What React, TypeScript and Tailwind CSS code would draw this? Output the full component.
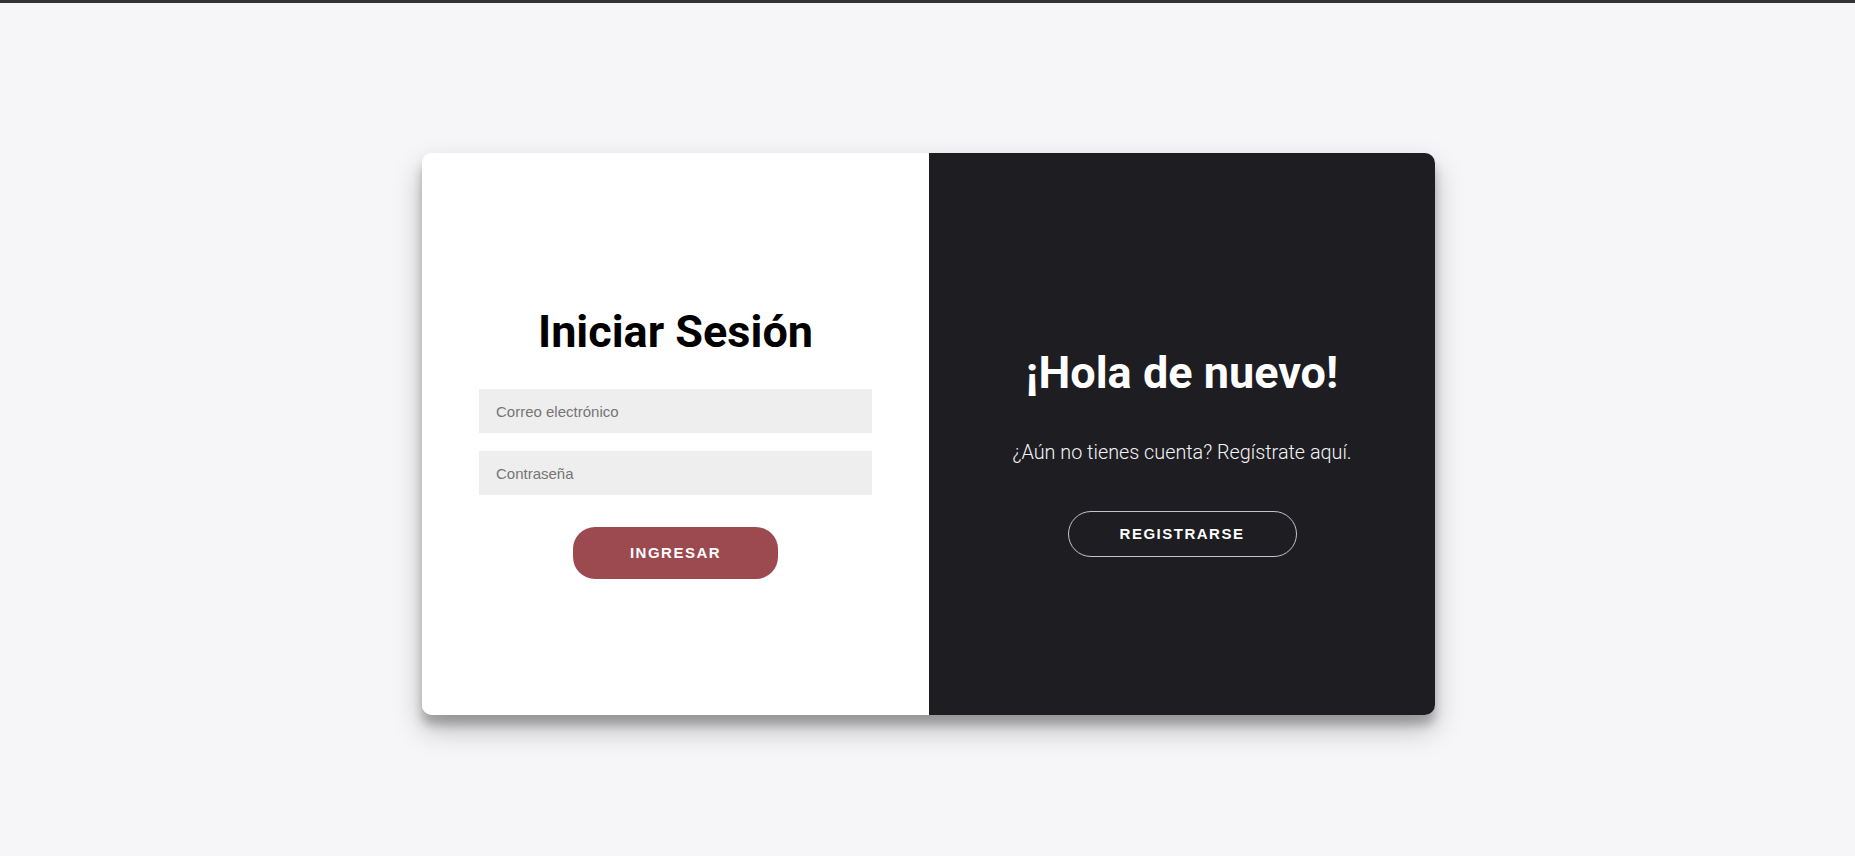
import { useState } from "react";

const App: React.FC = () => {
    const [email, setEmail] = useState("");
    const [password, setPassword] = useState("");

    return (
        <div className="min-h-screen bg-[#f6f6f8] font-['Roboto',sans-serif]">
            <div className="h-[3px] bg-[#333336]" />
            <div className="flex justify-center pt-[150px] pl-[2px]">
                <div className="flex w-[1013px] h-[562px] rounded-[10px] overflow-hidden bg-white shadow-[0_14px_28px_rgba(0,0,0,0.25),0_10px_10px_rgba(0,0,0,0.22)]">
                    {/* login */}
                    <form
                        className="flex w-[507px] flex-col items-center bg-white px-[57px] pt-[152px]"
                        onSubmit={(e) => e.preventDefault()}
                    >
                        <h1 className="text-[45px] leading-[54px] font-bold text-black">
                            Iniciar Sesión
                        </h1>
                        <input
                            type="email"
                            value={email}
                            onChange={(e) => setEmail(e.target.value)}
                            placeholder="Correo electrónico"
                            className="mt-[30px] h-[44px] w-full bg-[#eeeeee] px-[17px] font-['Liberation_Sans',Arial,sans-serif] text-[15px] text-black outline-none placeholder:text-[#757575]"
                        />
                        <input
                            type="password"
                            value={password}
                            onChange={(e) => setPassword(e.target.value)}
                            placeholder="Contraseña"
                            className="mt-[18px] h-[44px] w-full bg-[#eeeeee] px-[17px] font-['Liberation_Sans',Arial,sans-serif] text-[15px] text-black outline-none placeholder:text-[#757575]"
                        />
                        <button
                            type="submit"
                            className="mt-[32px] flex h-[52px] w-[205px] items-center justify-center rounded-[22px] bg-[#9c4a50] font-['Liberation_Sans',Arial,sans-serif] text-[15px] font-bold uppercase tracking-[1.5px] text-white"
                        >
                            Ingresar
                        </button>
                    </form>

                    {/* register */}
                    <div className="flex w-[506px] flex-col items-center bg-[#1e1d22] pt-[193px] text-white">
                        <h1 className="text-[45px] leading-[54px] font-bold">
                            ¡Hola de nuevo!
                        </h1>
                        <p className="mt-[39px] text-[19.8px] leading-[28px] font-light text-[#f4f4f6]">
                            ¿Aún no tienes cuenta? Regístrate aquí.
                        </p>
                        <button className="mt-[44px] flex h-[46px] w-[229px] items-center justify-center rounded-full border border-[#c4c4cc] font-['Liberation_Sans',Arial,sans-serif] text-[15px] font-bold uppercase tracking-[1.5px] text-white">
                            Registrarse
                        </button>
                    </div>
                </div>
            </div>
        </div>
    );
};

export default App;
